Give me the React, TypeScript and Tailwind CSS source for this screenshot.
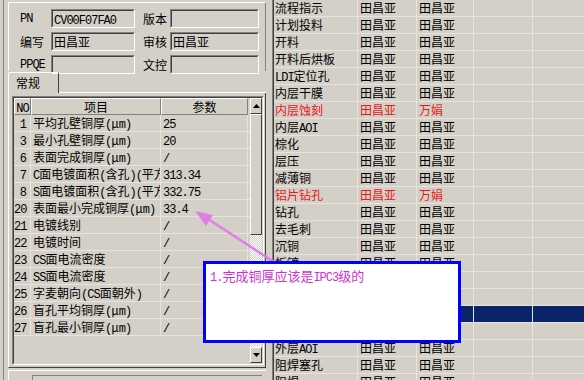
import React from "react";

// split a string into ascii / cjk runs so latin gets the narrow mono face
const runRe = /[\x00-\x7f]+|[^\x00-\x7f]+/g;

function T({ s }: { s: string }) {
  const parts = s.match(runRe) ?? [];
  return (
    <>
      {parts.map((p, i) =>
        p.charCodeAt(0) < 128 ? (
          <span key={i} className="font-['Liberation_Mono',monospace] text-[12px] tracking-[-1px]">
            {p}
          </span>
        ) : (
          <span key={i}>{p}</span>
        )
      )}
    </>
  );
}

function Field({ value, w }: { value?: string; w: string }) {
  return (
    <div className={`${w} h-[19px] shrink-0 border border-t-[#808080] border-l-[#808080] border-b-white border-r-white`}>
      <div className="h-full border border-t-[#404040] border-l-[#404040] border-b-[#d4d0c8] border-r-[#d4d0c8] pl-[1px] leading-[15px] whitespace-nowrap overflow-hidden">
        {value && <T s={value} />}
      </div>
    </div>
  );
}

function Label({ text, w }: { text: string; w: string }) {
  return (
    <div className={`${w} shrink-0 leading-[19px] whitespace-nowrap`}>
      <T s={text} />
    </div>
  );
}

const params: [string, string, string][] = [
  ["1", "平均孔壁铜厚(μm)", "25"],
  ["3", "最小孔壁铜厚(μm)", "20"],
  ["6", "表面完成铜厚(μm)", "/"],
  ["7", "C面电镀面积(含孔)(平方", "313.34"],
  ["8", "S面电镀面积(含孔)(平方", "332.75"],
  ["20", "表面最小完成铜厚(μm)", "33.4"],
  ["21", "电镀线别", "/"],
  ["22", "电镀时间", "/"],
  ["23", "CS面电流密度", "/"],
  ["24", "SS面电流密度", "/"],
  ["25", "字麦朝向(CS面朝外)", "/"],
  ["26", "盲孔平均铜厚(μm)", "/"],
  ["27", "盲孔最小铜厚(μm)", "/"],
];

type Proc = { name: string; a: string; b: string; red?: boolean; sel?: boolean };

// rows 16-19 sit under the note box, so their cells stay blank
const procs: Proc[] = [
  { name: "流程指示", a: "田昌亚", b: "田昌亚" },
  { name: "计划投料", a: "田昌亚", b: "田昌亚" },
  { name: "开料", a: "田昌亚", b: "田昌亚" },
  { name: "开料后烘板", a: "田昌亚", b: "田昌亚" },
  { name: "LDI定位孔", a: "田昌亚", b: "田昌亚" },
  { name: "内层干膜", a: "田昌亚", b: "田昌亚" },
  { name: "内层蚀刻", a: "田昌亚", b: "万娟", red: true },
  { name: "内层AOI", a: "田昌亚", b: "田昌亚" },
  { name: "棕化", a: "田昌亚", b: "田昌亚" },
  { name: "层压", a: "田昌亚", b: "田昌亚" },
  { name: "减薄铜", a: "田昌亚", b: "田昌亚" },
  { name: "铝片钻孔", a: "田昌亚", b: "万娟", red: true },
  { name: "钻孔", a: "田昌亚", b: "田昌亚" },
  { name: "去毛刺", a: "田昌亚", b: "田昌亚" },
  { name: "沉铜", a: "田昌亚", b: "田昌亚" },
  { name: "板镀", a: "田昌亚", b: "田昌亚" },
  { name: "", a: "", b: "" },
  { name: "", a: "", b: "" },
  { name: "", a: "", b: "", sel: true },
  { name: "", a: "", b: "" },
  { name: "外层AOI", a: "田昌亚", b: "田昌亚" },
  { name: "阻焊塞孔", a: "田昌亚", b: "田昌亚" },
  { name: "阻焊", a: "田昌亚", b: "田昌亚" },
];

function ScrollBtn({ up }: { up?: boolean }) {
  return (
    <div className="h-[16px] shrink-0 border border-t-white border-l-white border-r-[#404040] border-b-[#404040] flex items-center justify-center">
      <svg width="7" height="4" viewBox="0 0 7 4">
        <path d={up ? "M3.5 0L7 4H0Z" : "M0 0H7L3.5 4Z"} fill="#000" />
      </svg>
    </div>
  );
}

function ParamTable() {
  return (
    <div className="h-full border border-t-[#808080] border-l-[#808080] border-b-white border-r-white">
      <div className="h-full flex border border-t-[#404040] border-l-[#404040] border-b-[#d4d0c8] border-r-[#d4d0c8]">
        <div className="w-[236px] shrink-0 flex flex-col">
          <div className="flex h-[17px] shrink-0 leading-[15px]">
            <div className="w-[17px] shrink-0 border border-white border-r-[#808080] border-b-[#808080] text-center">
              <T s="NO" />
            </div>
            <div className="w-[130px] shrink-0 border border-white border-r-[#808080] border-b-[#808080] text-center">项目</div>
            <div className="w-[87px] shrink-0 border border-white border-r-[#808080] border-b-[#808080] text-center">参数</div>
            <div className="flex-1" />
          </div>
          {params.map(([no, item, val]) => (
            <div key={no} className="flex h-[17px] shrink-0 leading-[16px] border-b border-[#e6e4de]">
              <div className="w-[17px] shrink-0 border-r border-[#e6e4de] text-right pr-[4px] whitespace-nowrap">
                <T s={no} />
              </div>
              <div className="w-[130px] shrink-0 border-r border-[#e6e4de] pl-[2px] whitespace-nowrap overflow-hidden">
                <T s={item} />
              </div>
              <div className="w-[87px] shrink-0 border-r border-[#e6e4de] pl-[2px] whitespace-nowrap overflow-hidden">
                <T s={val} />
              </div>
            </div>
          ))}
        </div>
        <div className="w-[12px] shrink-0 ml-auto flex flex-col">
          <ScrollBtn up />
          <div className="h-[121px] shrink-0 border border-t-white border-l-white border-r-[#404040] border-b-[#404040]" />
          <div className="flex-1 bg-[image:repeating-conic-gradient(#ffffff_0%_25%,#d4d0c8_0%_50%)] bg-[length:2px_2px]" />
          <ScrollBtn />
        </div>
      </div>
    </div>
  );
}

function LeftPanel() {
  return (
    <div className="w-[272px] shrink-0 h-full pl-[3px] pr-[6px]">
      <div className="h-full flex flex-col border-l border-[#808080] pl-[4px] pt-[2px]">
        {/* header fields */}
        <div className="h-[69px] shrink-0 border-t border-l border-white border-r border-r-[#808080] pl-[11px] pt-[4px] flex flex-col gap-[2.5px]">
          <div className="flex items-center">
            <Label text="PN" w="w-[31px]" />
            <Field value="CV00F07FA0" w="w-[84px]" />
            <Label text="版本" w="w-[27px] ml-[8px]" />
            <Field w="w-[89px]" />
          </div>
          <div className="flex items-center">
            <Label text="编写" w="w-[31px]" />
            <Field value="田昌亚" w="w-[84px]" />
            <Label text="审核" w="w-[27px] ml-[8px]" />
            <Field value="田昌亚" w="w-[89px]" />
          </div>
          <div className="flex items-center">
            <Label text="PPQE" w="w-[31px]" />
            <Field w="w-[84px]" />
            <Label text="文控" w="w-[27px] ml-[8px]" />
            <Field w="w-[89px]" />
          </div>
        </div>
        {/* tab strip */}
        <div className="h-[22px] shrink-0 flex">
          <div className="w-[51px] mt-[1px] border-t border-l border-white border-r border-r-[#404040] rounded-t-[2px] pl-[7px] leading-[19px]">
            常规
          </div>
          <div className="flex-1 border-b border-white" />
        </div>
        {/* tab page */}
        <div className="flex-1 min-h-0 border-l border-white border-r border-b border-r-[#404040] border-b-[#404040] pt-[3px] pl-[3px] pr-[1px] pb-[2px]">
          <ParamTable />
        </div>
        {/* bottom strip */}
        <div className="h-[10px] shrink-0 mt-[2px] border-t border-l border-white pl-[23px] pt-[4px]">
          <div className="h-full border-t border-l border-[#808080] mr-[4px]" />
        </div>
      </div>
    </div>
  );
}

function ProcessGrid() {
  return (
    <div className="flex-1 h-full border-l border-[#808080]">
      <div className="h-full overflow-hidden border-l border-[#404040]">
        {procs.map((p, i) => (
          <div
            key={i}
            className={`flex h-[17px] border-b border-[#e6e4de] leading-[16px] whitespace-nowrap ${
              p.sel ? "bg-[#0a246a] text-white" : p.red ? "text-[#e81818]" : ""
            }`}
          >
            <div className="w-[84px] shrink-0 border-r border-[#e6e4de] pl-[1px] overflow-hidden">
              <T s={p.name} />
            </div>
            <div className="w-[59px] shrink-0 border-r border-[#e6e4de] pl-[2px] overflow-hidden">{p.a}</div>
            <div className="w-[57px] shrink-0 border-r border-[#e6e4de] pl-[2px] overflow-hidden">{p.b}</div>
            <div className="w-[59px] shrink-0 border-r border-[#e6e4de]" />
            <div className="flex-1" />
          </div>
        ))}
      </div>
    </div>
  );
}

function Arrow() {
  return (
    <svg className="absolute left-0 top-0 pointer-events-none" width="584" height="380" viewBox="0 0 584 380">
      <line x1="274" y1="262" x2="208" y2="219" stroke="#e07ee8" strokeWidth="2.5" />
      <polygon points="195,211 213,215 206,226" fill="#e07ee8" />
    </svg>
  );
}

export default function App() {
  return (
    <div className="relative w-[584px] h-[380px] overflow-hidden flex bg-[#d4d0c8] text-black text-[12px] font-['Noto_Sans_CJK_SC',sans-serif]">
      <LeftPanel />
      <ProcessGrid />
      <Arrow />
      <div className="absolute left-[203px] top-[261px] w-[258px] h-[82px] border-[3px] border-[#0000ff] bg-white pl-[4px] pt-[3px] text-[13px] leading-[18px] text-[#cc33cc] whitespace-nowrap">
        <T s="1.完成铜厚应该是IPC3级的" />
      </div>
    </div>
  );
}
